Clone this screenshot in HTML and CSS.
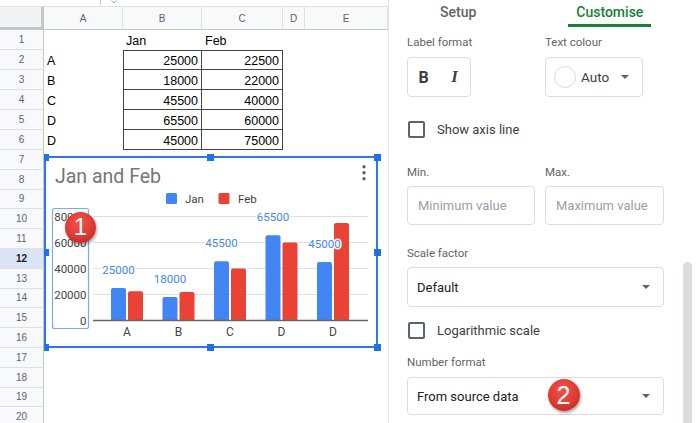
FILE: index.html
```html
<!DOCTYPE html>
<html>
<head>
<meta charset="utf-8">
<link rel="stylesheet" href="styles.css">
</head>
<body>
<section class="sheet">
  <div class="strip"><span class="strip-div"></span><svg class="strip-chev" width="6" height="4" viewBox="0 0 6 4"><path d="M0.5 0.5 L3 3 L5.5 0.5" fill="none" stroke="#9aa0a6" stroke-width="1"/></svg></div>
  <div class="grid">
    <div class="corner"></div><div class="ch">A</div><div class="ch">B</div><div class="ch">C</div><div class="ch">D</div><div class="ch">E</div>
    <div class="rh">1</div><div class="c"></div><div class="c">Jan</div><div class="c">Feb</div><div class="c"></div><div class="c"></div>
    <div class="rh">2</div><div class="c">A</div><div class="c r t tl tt">25000</div><div class="c r t tt">22500</div><div class="c"></div><div class="c"></div>
    <div class="rh">3</div><div class="c">B</div><div class="c r t tl">18000</div><div class="c r t">22000</div><div class="c"></div><div class="c"></div>
    <div class="rh">4</div><div class="c">C</div><div class="c r t tl">45500</div><div class="c r t">40000</div><div class="c"></div><div class="c"></div>
    <div class="rh">5</div><div class="c">D</div><div class="c r t tl">65500</div><div class="c r t">60000</div><div class="c"></div><div class="c"></div>
    <div class="rh">6</div><div class="c">D</div><div class="c r t tl">45000</div><div class="c r t">75000</div><div class="c"></div><div class="c"></div>
    <div class="rh">7</div><div class="c"></div><div class="c"></div><div class="c"></div><div class="c"></div><div class="c"></div>
    <div class="rh">8</div><div class="c"></div><div class="c"></div><div class="c"></div><div class="c"></div><div class="c"></div>
    <div class="rh">9</div><div class="c"></div><div class="c"></div><div class="c"></div><div class="c"></div><div class="c"></div>
    <div class="rh">10</div><div class="c"></div><div class="c"></div><div class="c"></div><div class="c"></div><div class="c"></div>
    <div class="rh">11</div><div class="c"></div><div class="c"></div><div class="c"></div><div class="c"></div><div class="c"></div>
    <div class="rh sel">12</div><div class="c"></div><div class="c"></div><div class="c"></div><div class="c"></div><div class="c"></div>
    <div class="rh">13</div><div class="c"></div><div class="c"></div><div class="c"></div><div class="c"></div><div class="c"></div>
    <div class="rh">14</div><div class="c"></div><div class="c"></div><div class="c"></div><div class="c"></div><div class="c"></div>
    <div class="rh">15</div><div class="c"></div><div class="c"></div><div class="c"></div><div class="c"></div><div class="c"></div>
    <div class="rh">16</div><div class="c"></div><div class="c"></div><div class="c"></div><div class="c"></div><div class="c"></div>
    <div class="rh">17</div><div class="c"></div><div class="c"></div><div class="c"></div><div class="c"></div><div class="c"></div>
    <div class="rh">18</div><div class="c"></div><div class="c"></div><div class="c"></div><div class="c"></div><div class="c"></div>
    <div class="rh">19</div><div class="c"></div><div class="c"></div><div class="c"></div><div class="c"></div><div class="c"></div>
    <div class="rh">20</div><div class="c"></div><div class="c"></div><div class="c"></div><div class="c"></div><div class="c"></div>
  </div>

  <div class="chart-layer">
    <div class="chart">
      <svg class="plot" width="330" height="188" viewBox="46 158 330 188">
        <text class="title" x="55" y="183">Jan and Feb</text>
        <circle cx="364" cy="166.7" r="1.7" fill="#5f6368"/>
        <circle cx="364" cy="172.7" r="1.7" fill="#5f6368"/>
        <circle cx="364" cy="178.7" r="1.7" fill="#5f6368"/>
        <rect x="166" y="193" width="11" height="11" rx="1.5" fill="#4285f4"/>
        <text class="legend" x="185" y="202.5">Jan</text>
        <rect x="218.5" y="193" width="11" height="11" rx="1.5" fill="#ea4335"/>
        <text class="legend" x="238" y="202.5">Feb</text>
        <g stroke="#e0e0e0" stroke-width="1">
          <line x1="93" y1="216.5" x2="368" y2="216.5"/>
          <line x1="93" y1="242.5" x2="368" y2="242.5"/>
          <line x1="93" y1="268.5" x2="368" y2="268.5"/>
          <line x1="93" y1="294.5" x2="368" y2="294.5"/>
        </g>
        <g class="ylab">
          <text x="86.5" y="220.5">80000</text>
          <text x="86.5" y="246.5">60000</text>
          <text x="86.5" y="272.5">40000</text>
          <text x="86.5" y="298.5">20000</text>
          <text x="86.5" y="324.5">0</text>
        </g>
        <rect x="52.5" y="208.5" width="36" height="120" rx="2" fill="none" stroke="#7baaf7" stroke-width="1.2"/>
        <g fill="#4285f4">
          <path d="M111 320.5V290Q111 288 113 288H124Q126 288 126 290V320.5Z"/>
          <path d="M162.5 320.5V299.1Q162.5 297.1 164.5 297.1H175.5Q177.5 297.1 177.5 299.1V320.5Z"/>
          <path d="M214 320.5V263.35Q214 261.35 216 261.35H227Q229 261.35 229 263.35V320.5Z"/>
          <path d="M265.5 320.5V237.35Q265.5 235.35 267.5 235.35H278.5Q280.5 235.35 280.5 237.35V320.5Z"/>
          <path d="M317 320.5V264Q317 262 319 262H330Q332 262 332 264V320.5Z"/>
        </g>
        <g fill="#ea4335">
          <path d="M128 320.5V293.25Q128 291.25 130 291.25H141Q143 291.25 143 293.25V320.5Z"/>
          <path d="M179.5 320.5V293.9Q179.5 291.9 181.5 291.9H192.5Q194.5 291.9 194.5 293.9V320.5Z"/>
          <path d="M231 320.5V270.5Q231 268.5 233 268.5H244Q246 268.5 246 270.5V320.5Z"/>
          <path d="M282.5 320.5V244.5Q282.5 242.5 284.5 242.5H295.5Q297.5 242.5 297.5 244.5V320.5Z"/>
          <path d="M334 320.5V225Q334 223 336 223H347Q349 223 349 225V320.5Z"/>
        </g>
        <line x1="93" y1="320.5" x2="368" y2="320.5" stroke="#666" stroke-width="1.3"/>
        <g class="dlab">
          <text x="118.5" y="273.5">25000</text>
          <text x="170" y="282.6">18000</text>
          <text x="221.5" y="246.9">45500</text>
          <text x="273" y="220.9">65500</text>
          <text x="324.5" y="247.5">45000</text>
        </g>
        <g class="xlab">
          <text x="127" y="336">A</text>
          <text x="178.5" y="336">B</text>
          <text x="230" y="336">C</text>
          <text x="281.5" y="336">D</text>
          <text x="333" y="336">D</text>
        </g>
      </svg>
      <span class="h h-tl"></span><span class="h h-tm"></span><span class="h h-tr"></span>
      <span class="h h-ml"></span><span class="h h-mr"></span>
      <span class="h h-bl"></span><span class="h h-bm"></span><span class="h h-br"></span>
    </div>
  </div>
  <div class="badge badge-1">1</div>
</section>

<aside class="panel">
  <div class="panel-body">
    <div class="tabs">
      <div class="tab">Setup</div>
      <div class="tab active">Customise</div>
    </div>
    <div class="pair fmt-row">
      <div class="field">
        <div class="label">Label format</div>
        <div class="box fmt"><span class="bold">B</span><span class="ital">I</span></div>
      </div>
      <div class="field">
        <div class="label">Text colour</div>
        <div class="box colour"><span class="swatch"></span><span class="auto">Auto</span><span class="caret"></span></div>
      </div>
    </div>
    <div class="check c1"><span class="cb"></span>Show axis line</div>
    <div class="pair minmax">
      <div class="field">
        <div class="label">Min.</div>
        <div class="box input">Minimum value</div>
      </div>
      <div class="field">
        <div class="label">Max.</div>
        <div class="box input">Maximum value</div>
      </div>
    </div>
    <div class="label scale-l">Scale factor</div>
    <div class="box select">Default<span class="caret"></span></div>
    <div class="check c2"><span class="cb"></span>Logarithmic scale</div>
    <div class="label nf-l">Number format</div>
    <div class="box select nf">From source data<span class="caret"></span><div class="badge badge-2">2</div></div>
  </div>
  <div class="track"><div class="thumb"></div></div>
</aside>
</body>
</html>
```
FILE: styles.css
```css
* { box-sizing: border-box; }
html, body { margin: 0; padding: 0; }
body {
  width: 696px;
  height: 423px;
  overflow: hidden;
  display: flex;
  background: #fff;
  font-family: Roboto, "Liberation Sans", sans-serif;
}

/* ---------- sheet ---------- */
.sheet {
  position: relative;
  width: 388px;
  flex: none;
  display: flex;
  flex-direction: column;
  overflow: hidden;
  font-family: "Liberation Sans", Arial, sans-serif;
}
.strip {
  height: 7px;
  flex: none;
  border-bottom: 1px solid #e0e0e0;
  display: flex;
  align-items: flex-start;
  padding-left: 100px;
  gap: 10px;
}
.strip-div { width: 1px; height: 5px; background: #c8c8c8; }
.strip-chev { margin-top: 0; }
.grid {
  display: grid;
  grid-template-columns: 44px 79px 79px 81px 22px 83px;
  grid-template-rows: 23px repeat(6, 20px) repeat(14, 19.8px);
}
.corner {
  background: #f1f3f4;
  border-right: 3px solid #c4c7c5;
  border-bottom: 3px solid #c4c7c5;
}
.ch {
  background: #f8f9fa;
  border-right: 1px solid #e0e0e0;
  border-bottom: 1px solid #c4c7c5;
  font-size: 10px;
  color: #5f6368;
  display: flex;
  align-items: center;
  justify-content: center;
}
.rh {
  background: #f8f9fa;
  border-right: 1px solid #c4c7c5;
  border-bottom: 1px solid #e0e0e0;
  font-size: 10px;
  color: #5f6368;
  display: flex;
  align-items: center;
  justify-content: center;
}
.rh.sel { background: #dbe5f6; font-weight: bold; color: #202124; }
.c {
  font-size: 12.5px;
  color: #000;
  padding: 2px 3px 0 3px;
  line-height: 18px;
  white-space: nowrap;
}
.c.r { text-align: right; }
.t { border-right: 1px solid #444; border-bottom: 1px solid #444; }
.tl { border-left: 1px solid #444; }
.tt { border-top: 1px solid #444; padding-top: 1px; }

/* ---------- chart ---------- */
.chart-layer {
  position: absolute;
  left: 44px;
  top: 0;
  right: 0;
  bottom: 0;
  overflow: hidden;
}
.chart {
  position: absolute;
  left: 0;
  top: 156px;
  width: 334px;
  height: 192px;
  border: 2px solid #2a7ae8;
  background: #fff;
}
.plot { display: block; }
.plot text { font-family: Roboto, "Liberation Sans", sans-serif; }
.plot .title { font-size: 19.5px; fill: #757575; }
.plot .legend { font-size: 11.5px; fill: #444; }
.ylab text { font-size: 11.5px; fill: #444; text-anchor: end; }
.xlab text { font-size: 12px; fill: #444; text-anchor: middle; }
.dlab text {
  font-size: 11.5px;
  fill: #4285f4;
  text-anchor: middle;
  stroke: #fff;
  stroke-width: 3px;
  paint-order: stroke;
  stroke-linejoin: round;
}
.h { position: absolute; width: 7px; height: 7px; background: #1a73e8; }
.h-tl { left: -4.5px; top: -4.5px; }
.h-tm { left: 160.5px; top: -4.5px; }
.h-tr { left: 327.5px; top: -4.5px; }
.h-ml { left: -4.5px; top: 90.5px; }
.h-mr { left: 327.5px; top: 90.5px; }
.h-bl { left: -4.5px; top: 185.5px; }
.h-bm { left: 160.5px; top: 185.5px; }
.h-br { left: 327.5px; top: 185.5px; }

.badge {
  position: absolute;
  width: 31px;
  height: 31px;
  border-radius: 50%;
  background: radial-gradient(circle at 45% 35%, #f4524a 0%, #dc3a32 55%, #b71c1c 100%);
  color: #fff;
  font-family: "Liberation Sans", Arial, sans-serif;
  font-size: 24px;
  line-height: 1;
  display: flex;
  align-items: center;
  justify-content: center;
  box-shadow: 1px 2px 3px rgba(0, 0, 0, 0.35);
  z-index: 5;
}
.badge-1 { left: 65px; top: 211.5px; }
.badge-2 { left: 139.5px; top: 1px; width: 32px; height: 32px; font-size: 25px; }

/* ---------- panel ---------- */
.panel {
  flex: 1;
  display: flex;
  border-left: 1px solid #e3e3e3;
  color: #3c4043;
}
.panel-body { width: 294px; padding-left: 18px; flex: none; }
.tabs { display: flex; height: 27px; margin-left: 25px; gap: 84px; }
.tab {
  padding: 3px 8px 0;
  font-size: 14px;
  font-weight: 500;
  line-height: 18px;
  color: #5f6368;
}
.tab.active { color: #188038; border-bottom: 3px solid #188038; }

.label { font-size: 11.5px; color: #5f6368; line-height: 16px; }
.pair { display: grid; grid-template-columns: 128px 119px; column-gap: 10px; }
.box { border: 1px solid #dadce0; border-radius: 4px; }

.fmt-row { margin-top: 7px; }
.fmt-row .box { margin-top: 7px; height: 40px; }
.fmt { width: 64px; display: flex; align-items: center; }
.fmt span { width: 31px; text-align: center; color: #3c4043; }
.bold { font-weight: 700; font-size: 16px; }
.ital { font-family: "Liberation Serif", serif; font-style: italic; font-weight: 700; font-size: 17px; }
.colour { width: 98px; display: flex; align-items: center; padding-left: 8px; }
.swatch { width: 22px; height: 22px; border-radius: 50%; border: 1px solid #dadce0; flex: none; }
.auto { margin-left: 5px; font-size: 13.5px; color: #3c4043; }
.caret {
  width: 0;
  height: 0;
  border-left: 4px solid transparent;
  border-right: 4px solid transparent;
  border-top: 4px solid #5f6368;
  margin-left: auto;
  flex: none;
}
.colour .caret { margin-right: 13px; }

.check {
  display: flex;
  align-items: center;
  height: 17px;
  font-size: 13px;
  color: #3c4043;
  gap: 12px;
}
.cb {
  width: 17px;
  height: 17px;
  border: 2px solid #5f6368;
  border-radius: 2px;
  margin-left: 1px;
  flex: none;
}
.c1 { margin-top: 24px; }
.minmax { margin-top: 26px; }
.input {
  margin-top: 6px;
  height: 39px;
  display: flex;
  align-items: center;
  padding-left: 10px;
  font-size: 13px;
  color: #9aa0a6;
  white-space: nowrap;
  overflow: hidden;
}
.scale-l { margin-top: 20px; }
.select {
  position: relative;
  margin-top: 6px;
  width: 257px;
  height: 40px;
  display: flex;
  align-items: center;
  padding: 0 13px 0 9px;
  font-size: 13px;
  color: #202124;
}
.c2 { margin-top: 15px; }
.nf-l { margin-top: 15px; }
.select.nf { margin-top: 7px; height: 38px; }

.track { width: 13px; padding-top: 262px; flex: none; }
.thumb { width: 9px; height: 200px; background: #dadce0; border-radius: 5px 5px 0 0; }
```
